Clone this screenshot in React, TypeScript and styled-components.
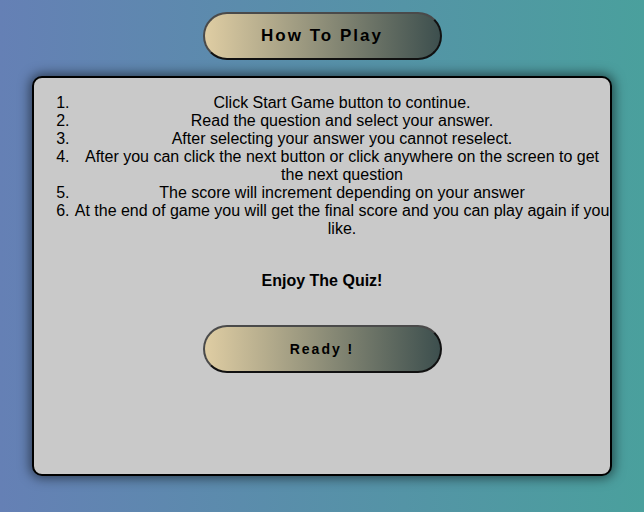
import React from "react";
import styled, { createGlobalStyle } from "styled-components";

const Global = createGlobalStyle`
  html, body { margin: 0; padding: 0; }
  body {
    width: 644px;
    height: 512px;
    overflow: hidden;
    background: linear-gradient(to right, #6580b5, #4aa09d);
    font-family: "Liberation Sans", Arial, sans-serif;
    color: #000;
  }
`;

const Page = styled.div`
  display: flex;
  flex-direction: column;
  align-items: center;
  padding-top: 12px;
`;

const PillButton = styled.button<{ $size: number; $h: number }>`
  width: 239px;
  height: ${(p) => p.$h}px;
  border-radius: 24px;
  border: 2px solid #4a4a4a;
  border-bottom-color: #111;
  border-right-color: #111;
  background: linear-gradient(to right, #dfcda3, #3d4f4e);
  font-family: "Liberation Sans", Arial, sans-serif;
  font-weight: bold;
  font-size: ${(p) => p.$size}px;
  letter-spacing: 2px;
  color: #000;
  padding: 0;
  cursor: pointer;
`;

const Panel = styled.div`
  margin-top: 16px;
  width: 580px;
  height: 400px;
  box-sizing: border-box;
  border: 2px solid #000;
  border-radius: 10px;
  background: #c9c9c9;
  box-shadow: 0 0 12px 2px rgba(0, 0, 0, 0.55);
  display: flex;
  flex-direction: column;
  align-items: center;
`;

const Steps = styled.ol`
  align-self: stretch;
  margin: 16px 0 0;
  padding-left: 40px;
  text-align: center;
  font-size: 16px;
  line-height: 18px;
`;

const Enjoy = styled.p`
  margin: 34px 0 0;
  font-weight: bold;
  font-size: 16px;
  line-height: 18px;
`;

const ReadyWrap = styled.div`
  margin-top: 35px;
`;

const steps = [
  "Click Start Game button to continue.",
  "Read the question and select your answer.",
  "After selecting your answer you cannot reselect.",
  "After you can click the next button or click anywhere on the screen to get the next question",
  "The score will increment depending on your answer",
  "At the end of game you will get the final score and you can play again if you like.",
];

export default function App() {
  return (
    <>
      <Global />
      <Page>
        <PillButton $size={17} $h={48}>How To Play</PillButton>
        <Panel>
          <Steps>
            {steps.map((s) => (
              <li key={s}>{s}</li>
            ))}
          </Steps>
          <Enjoy>Enjoy The Quiz!</Enjoy>
          <ReadyWrap>
            <PillButton $size={14} $h={48}>Ready !</PillButton>
          </ReadyWrap>
        </Panel>
      </Page>
    </>
  );
}
